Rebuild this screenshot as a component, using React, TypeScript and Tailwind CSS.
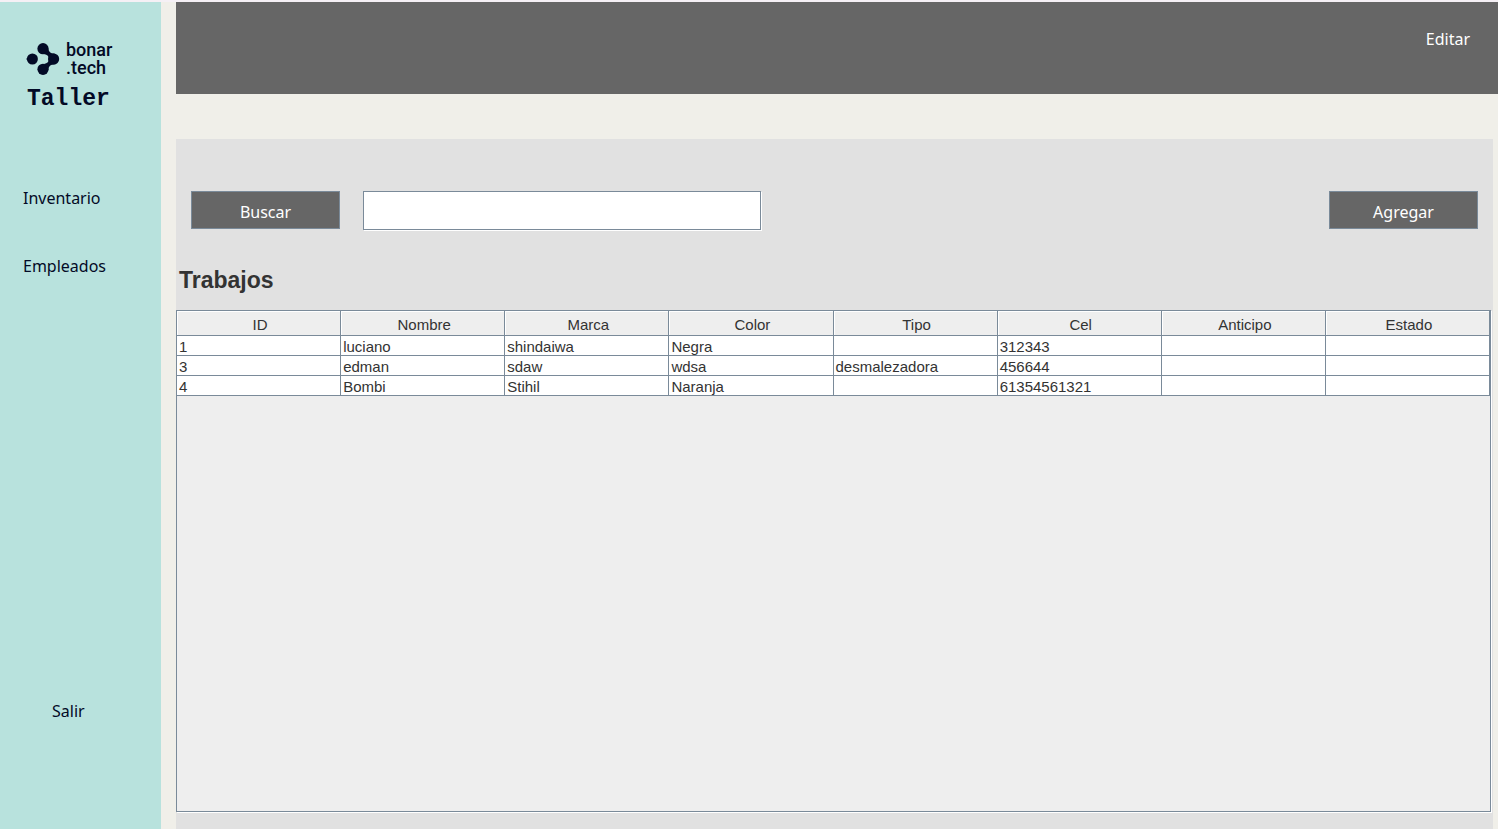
import { useState } from "react";

const columns = ["ID", "Nombre", "Marca", "Color", "Tipo", "Cel", "Anticipo", "Estado"];

const trabajos = [
  ["1", "luciano", "shindaiwa", "Negra", "", "312343", "", ""],
  ["3", "edman", "sdaw", "wdsa", "desmalezadora", "456644", "", ""],
  ["4", "Bombi", "Stihil", "Naranja", "", "61354561321", "", ""],
];

function LogoMark() {
  return (
    <svg viewBox="0 0 34 32" className="w-[34px] h-8 shrink-0" fill="currentColor" aria-hidden="true">
      <circle cx="6.4" cy="16" r="5.5" />
      <path d="M0 16l3-2v4z" />
      <circle cx="17" cy="5.7" r="5.6" />
      <circle cx="17" cy="26.3" r="5.6" />
      <circle cx="27.6" cy="16" r="5.6" />
      <path d="M22 4C22.5 8.5 24 10.5 29 10.7L33 16L29 21.3C24 21.5 22.5 23.5 22 28L18 21C21.5 20.5 23 18.5 23 16C23 13.5 21.5 11.5 18 11Z" />
    </svg>
  );
}

function Sidebar() {
  return (
    <aside className="w-[161px] shrink-0 bg-[#b8e2dd] text-[#030a26] flex flex-col pt-10">
      <div className="flex items-center pl-[26px] gap-[6px] h-[34px]">
        <LogoMark />
        <p className="font-['Roboto',sans-serif] font-medium text-lg leading-[18px]">
          bonar
          <br />
          .tech
        </p>
      </div>
      <p className="pl-[27px] mt-2 font-['Liberation_Mono',monospace] font-bold text-[23px] leading-[30px]">Taller</p>
      <nav className="flex flex-col items-start pl-[23px] mt-[72px] gap-11">
        <a href="#inventario" className="leading-6">Inventario</a>
        <a href="#empleados" className="leading-6">Empleados</a>
      </nav>
      <button type="button" className="self-start ml-[52px] mt-auto mb-[106px] leading-6">Salir</button>
    </aside>
  );
}

function TrabajosTable() {
  return (
    <div className="flex-1 mr-[2px] mb-[17px] bg-[#eeeeee] border border-[#7a8a99] shadow-[1px_1px_0_#fff] font-['Liberation_Sans',Arial,sans-serif] text-[15px] text-[#333333]">
      <table className="w-full table-fixed border-separate border-spacing-0">
        <thead>
          <tr>
            {columns.map((col) => (
              <th
                key={col}
                scope="col"
                className="h-[25px] p-0 pt-[3px] pl-[3px] leading-5 font-normal border-r border-b border-[#7a8a99] shadow-[inset_1px_1px_0_#fff]"
              >
                {col}
              </th>
            ))}
          </tr>
        </thead>
        <tbody>
          {trabajos.map((row) => (
            <tr key={row[0]} className="bg-white">
              {row.map((cell, i) => (
                <td key={i} className="h-5 p-0 pt-[2px] pl-[2px] leading-[17px] border-r border-b border-[#7a8a99]">
                  {cell}
                </td>
              ))}
            </tr>
          ))}
        </tbody>
      </table>
    </div>
  );
}

export default function App() {
  const [busqueda, setBusqueda] = useState("");

  return (
    <div className="min-h-screen flex border-t-2 border-[#f5f0f5] bg-[#f0efe9] font-['Noto_Sans',sans-serif] text-base">
      <Sidebar />
      <div className="flex-1 flex flex-col ml-[15px]">
        <header className="h-[92px] bg-[#666666] flex justify-end items-start pt-[25px] pr-7">
          <button type="button" className="text-white leading-6">Editar</button>
        </header>

        <main className="flex-1 flex flex-col mt-[45px] mr-[5px] pt-[52px] bg-[#e1e1e1]">
          <div className="flex items-start px-[15px]">
            <button type="button" className="w-[149px] h-[38px] pt-1 bg-[#666666] border border-[#7a8a99] text-white">
              Buscar
            </button>
            <input
              type="text"
              aria-label="Buscar trabajos"
              value={busqueda}
              onChange={(e) => setBusqueda(e.target.value)}
              className="ml-[23px] w-[398px] h-[39px] px-2 bg-white border border-[#7a8a99] shadow-[1px_1px_0_#fff] outline-none text-[#333333]"
            />
            <button type="button" className="ml-auto w-[149px] h-[38px] pt-1 bg-[#666666] border border-[#7a8a99] text-white">
              Agregar
            </button>
          </div>

          <h1 className="mt-[34px] mb-[14px] pl-[3px] font-['Liberation_Sans',Arial,sans-serif] font-bold text-[23px] leading-8 text-[#333333]">
            Trabajos
          </h1>

          <TrabajosTable />
        </main>
      </div>
    </div>
  );
}
